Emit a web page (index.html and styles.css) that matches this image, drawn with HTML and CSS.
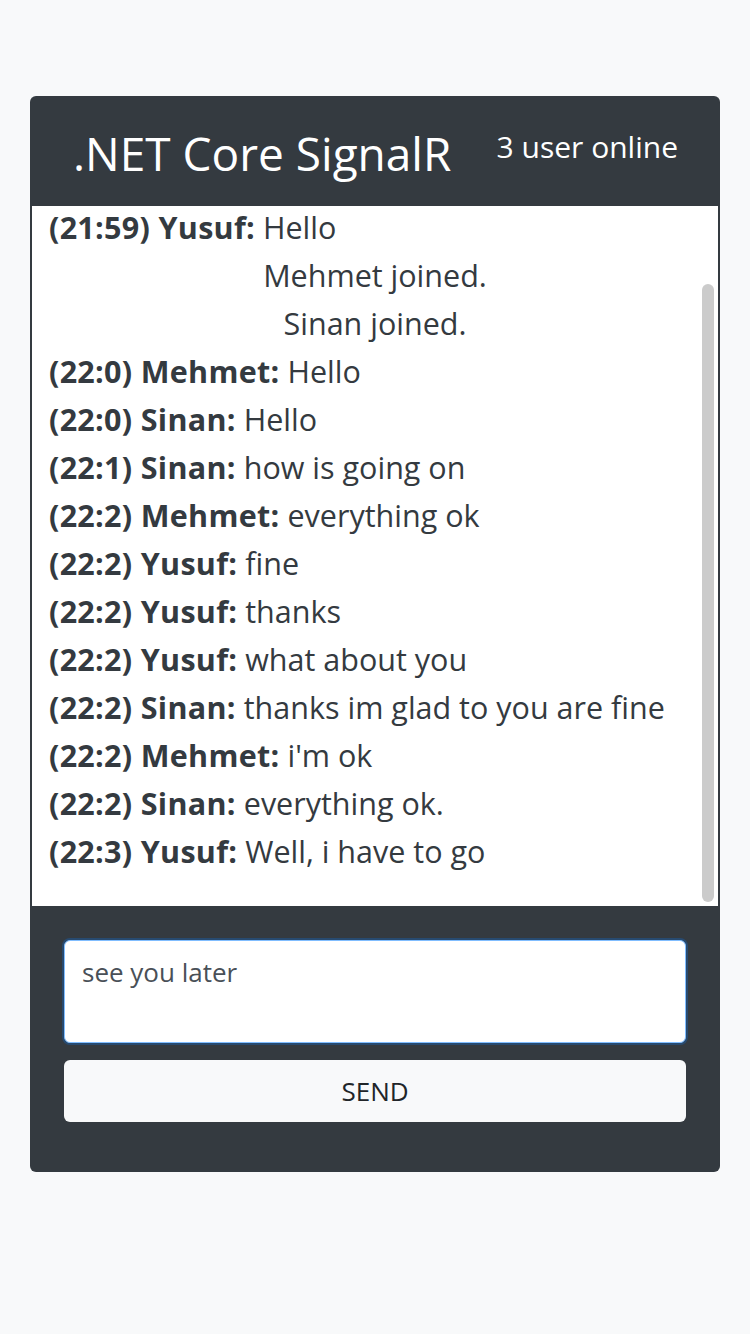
FILE: index.html
```html
<!DOCTYPE html>
<html>
<head>
<meta charset="utf-8">
<link rel="stylesheet" href="styles.css">
</head>
<body>
<div class="card">
  <div class="card-header">
    <h1 class="title">.NET Core SignalR</h1>
    <span class="online">3 user online</span>
  </div>
  <div class="messages">
    <ul class="list">
      <li><b>(21:59) Yusuf:</b> Hello</li>
      <li class="info">Mehmet joined.</li>
      <li class="info">Sinan joined.</li>
      <li><b>(22:0) Mehmet:</b> Hello</li>
      <li><b>(22:0) Sinan:</b> Hello</li>
      <li><b>(22:1) Sinan:</b> how is going on</li>
      <li><b>(22:2) Mehmet:</b> everything ok</li>
      <li><b>(22:2) Yusuf:</b> fine</li>
      <li><b>(22:2) Yusuf:</b> thanks</li>
      <li><b>(22:2) Yusuf:</b> what about you</li>
      <li><b>(22:2) Sinan:</b> thanks im glad to you are fine</li>
      <li><b>(22:2) Mehmet:</b> i'm ok</li>
      <li><b>(22:2) Sinan:</b> everything ok.</li>
      <li><b>(22:3) Yusuf:</b> Well, i have to go</li>
    </ul>
    <div class="thumb"></div>
  </div>
  <div class="footer">
    <textarea class="input">see you later</textarea>
    <button class="send">SEND</button>
  </div>
</div>
</body>
</html>
```
FILE: styles.css
```css
html, body {
  margin: 0;
  padding: 0;
  background: #f8f9fa;
}
body {
  font-family: "Open Sans", "Noto Sans", sans-serif;
  color: #343a40;
  padding-top: 96px;
}
.card {
  margin: 0 30px;
  background: #343a40;
  border-radius: 6px;
  padding: 0 2px;
}
.card-header {
  height: 110px;
  display: flex;
  align-items: center;
  padding: 0 40px 0 41px;
}
.title {
  margin: 0;
  font-size: 46px;
  font-weight: 400;
  color: #fff;
  line-height: 1.2;
  position: relative;
  top: 3px;
}
.online {
  margin-left: auto;
  color: #fff;
  font-size: 30px;
  line-height: 1.2;
  position: relative;
  top: -4px;
}
.messages {
  position: relative;
  height: 700px;
  background: #fff;
  overflow: hidden;
}
.list {
  list-style: none;
  margin: 0;
  padding: 0 17px;
  font-size: 30.5px;
  line-height: 48px;
  position: relative;
  top: -3px;
  white-space: nowrap;
}
.list b {
  font-weight: 700;
  letter-spacing: 0.3px;
}
.info {
  text-align: center;
}
.thumb {
  position: absolute;
  right: 4px;
  top: 78px;
  bottom: 4px;
  width: 12px;
  border-radius: 6px;
  background: #cbcbcb;
}
.footer {
  padding: 34px 32px 50px;
  display: flex;
  flex-direction: column;
  gap: 17px;
}
.input {
  box-sizing: border-box;
  height: 103px;
  width: 100%;
  resize: none;
  border: 1px solid #80bdff;
  border-radius: 6px;
  box-shadow: 0 0 0 2px rgba(0, 123, 255, 0.25);
  padding: 13px 17px;
  font-family: "Open Sans", "Noto Sans", sans-serif;
  font-size: 26px;
  color: #495057;
  outline: none;
  margin: 0;
}
.send {
  height: 62px;
  width: 100%;
  border: none;
  border-radius: 6px;
  background: #f8f9fa;
  color: #212529;
  font-family: "Open Sans", "Noto Sans", sans-serif;
  font-size: 26px;
  margin: 0;
}
```
